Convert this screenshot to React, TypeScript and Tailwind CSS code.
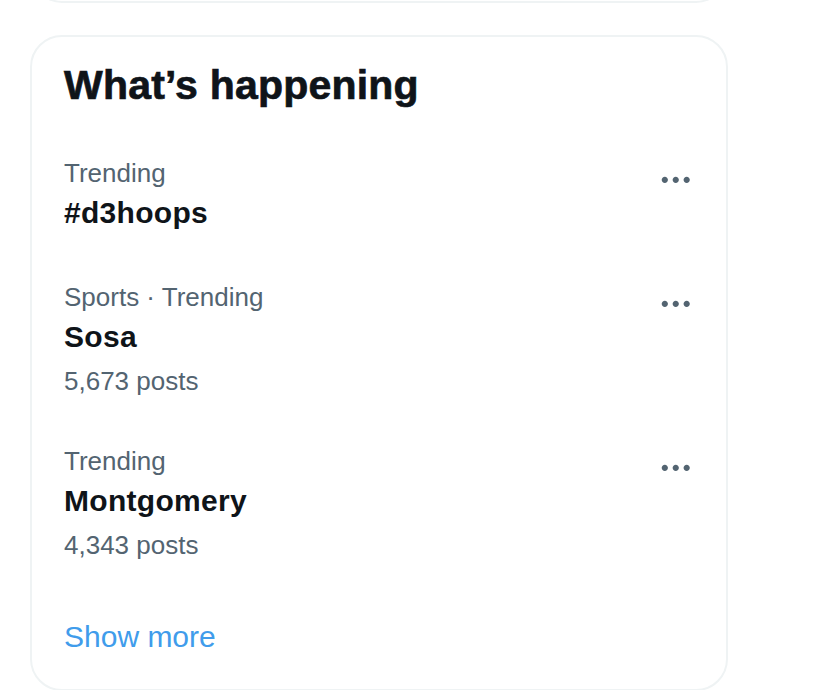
const trends = [
  { meta: 'Trending', name: '#d3hoops' },
  { meta: 'Sports · Trending', name: 'Sosa', posts: '5,673 posts' },
  { meta: 'Trending', name: 'Montgomery', posts: '4,343 posts' },
]

function MoreIcon() {
  return (
    <svg viewBox="0 0 24 24" className="w-[37.5px] h-[37.5px] fill-[#536471]" aria-hidden="true">
      <path d="M3 12c0-1.1.9-2 2-2s2 .9 2 2-.9 2-2 2-2-.9-2-2zm9 2c1.1 0 2-.9 2-2s-.9-2-2-2-2 .9-2 2 .9 2 2 2zm7 0c1.1 0 2-.9 2-2s-.9-2-2-2-2 .9-2 2 .9 2 2 2z" />
    </svg>
  )
}

export default function App() {
  return (
    <div
      className="h-[690px] w-[836px] overflow-hidden bg-white pl-[30px]"
      style={{ fontFamily: '"Liberation Sans", Arial, sans-serif' }}
    >
      {/* card above, only its bottom edge shows */}
      <div className="-mt-[31px] h-[34px] w-[698px] rounded-b-[32px] border-2 border-t-0 border-[#eff3f4]" />

      <section className="mt-[32px] w-[698px] rounded-[32px] border-2 border-[#eff3f4]">
        <h2 className="px-[32px] pt-[24px] pb-[24px] text-[41px] leading-[48px] font-bold tracking-[0.005em] text-[#0f1419] [-webkit-text-stroke:0.7px_#0f1419]">
          What’s happening
        </h2>

        {trends.map((t) => (
          <div key={t.name} className="flex justify-between px-[32px] py-[24px]">
            <div className="flex flex-col">
              <span className="text-[26px] leading-[32px] text-[#536471]">{t.meta}</span>
              <span className="mt-[4px] text-[30px] leading-[40px] font-bold tracking-[0.01em] text-[#0f1419]">{t.name}</span>
              {t.posts && (
                <span className="mt-[8px] text-[26px] leading-[32px] text-[#536471]">{t.posts}</span>
              )}
            </div>
            <div className="mt-[4px]">
              <MoreIcon />
            </div>
          </div>
        ))}

        <div className="px-[32px] py-[32px] text-[30px] leading-[40px] text-[#409ceb]">Show more</div>
      </section>
    </div>
  )
}
